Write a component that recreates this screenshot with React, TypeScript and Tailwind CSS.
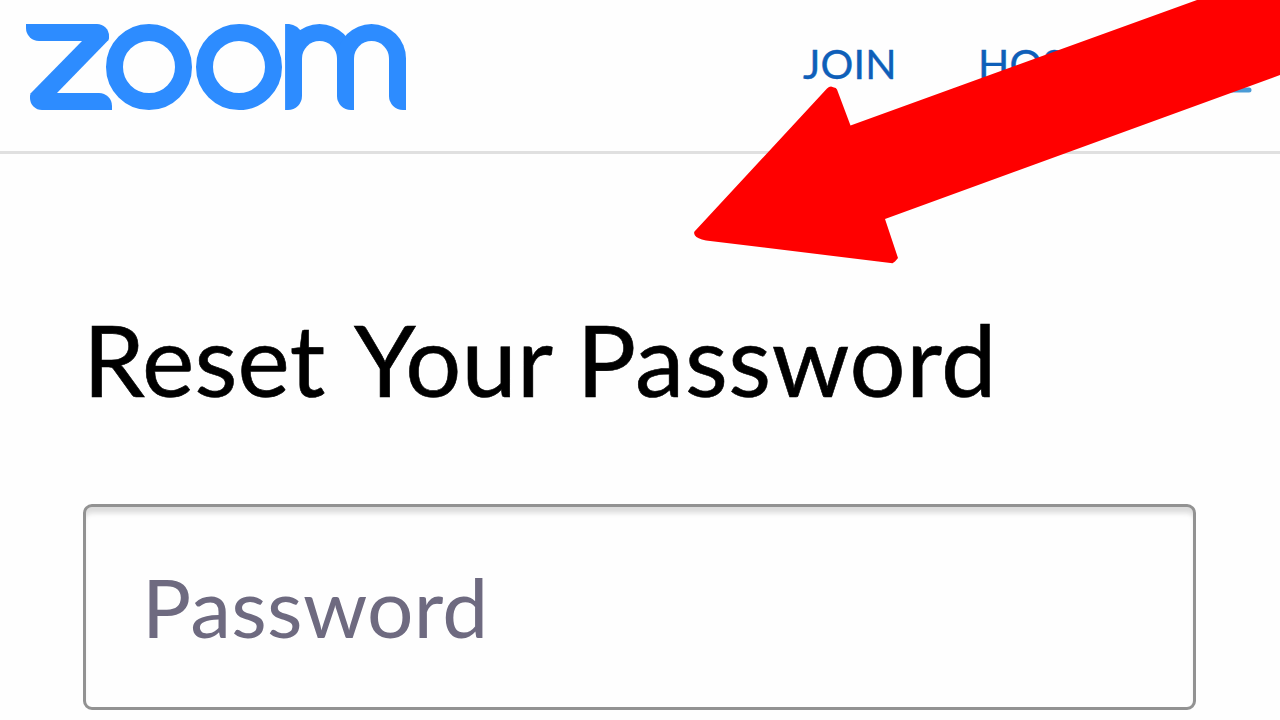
import React, { useState } from 'react';

function ZoomLogo() {
  return (
    <a href="#" aria-label="zoom" className="flex h-[86px] items-start">
      {/* z */}
      <span className="flex h-[86px] w-[86px] flex-col">
        <span className="h-[17px] w-[82.5px] rounded-tr-[12px] rounded-br-[3px] rounded-bl-[13px] bg-[#2d8cff]" />
        <span className="-my-px h-[54px] w-[86px] bg-[#2d8cff] [clip-path:polygon(57px_0,82.5px_0,30px_54px,4px_54px)]" />
        <span className="ml-[3.5px] h-[17px] w-[82.5px] rounded-tl-[3px] rounded-tr-[13px] rounded-bl-[12px] bg-[#2d8cff]" />
      </span>
      {/* oo */}
      <span className="-ml-[6.5px] h-[86px] w-[86px] rounded-full border-[17px] border-[#2d8cff]" />
      <span className="ml-[4.3px] h-[86px] w-[86px] rounded-full border-[17px] border-[#2d8cff]" />
      {/* m */}
      <span className="ml-[3.3px] flex h-[86px] w-[121px]">
        <span className="h-[86px] w-[17px] rounded-br-[14px] bg-[#2d8cff] [clip-path:polygon(0_0,4px_0,8px_1px,12px_3px,15px_6px,17px_6px,17px_100%,0_100%)]" />
        <span className="-ml-[17px] h-[36px] w-[69px] rounded-t-[34.5px] border-x-[17px] border-t-[17px] border-[#2d8cff]" />
        <span className="-ml-[17px] h-[36px] w-[69px] rounded-t-[34.5px] border-x-[17px] border-t-[17px] border-[#2d8cff]" />
        <span className="-ml-[69px] mt-[34px] h-[52px] w-[17px] shrink-0 rounded-bl-[14px] bg-[#2d8cff]" />
        <span className="mt-[34px] ml-[35px] h-[52px] w-[17px] shrink-0 rounded-bl-[14px] bg-[#2d8cff]" />
      </span>
    </a>
  );
}

function RedArrow() {
  return (
    <svg className="pointer-events-none absolute top-0 right-0" width="600" height="280" viewBox="680 0 600 280">
      <path
        d="M1197 0 L850.5 125.5 L837 89.5 Q836 87.5 834 87.5 L831 86.5 Q829 86.5 827 88.5 L694.5 231.5 Q693.5 233 695 235.5 Q697 238.5 706 240.5 L892.5 263.2 L895 261.5 L898 258 L885 219 L1280 75 V0 Z"
        fill="#ff0000"
      />
    </svg>
  );
}

export default function App() {
  const [password, setPassword] = useState('');

  const navClass = "text-[41px] leading-none font-normal tracking-[0.2px] text-[#0e5fb9] [-webkit-text-stroke:0.4px_#0e5fb9]";

  return (
    <div className="relative h-[720px] w-[1280px] overflow-hidden bg-[#fefefe] font-['Lato',sans-serif]">
      <header className="flex h-[154px] items-start border-b-[3px] border-[#e0e0e0] pt-6 pr-7 pl-[26px]">
        <ZoomLogo />
        <nav className="mt-[19px] ml-auto flex items-start">
          <a href="#" className={`${navClass} w-[175px]`}>JOIN</a>
          <a href="#" className={`${navClass} w-[226px]`}>HOST</a>
          <button aria-label="Menu" className="mt-1">
            <svg width="48" height="46" viewBox="0 0 48 46" fill="none" stroke="#4a9bd6" strokeWidth="5" strokeLinecap="round">
              <path d="M3 7h42M3 25h42M3 43h42" />
            </svg>
          </button>
        </nav>
      </header>

      <main className="px-[83px]">
        <h1 className="pt-[145px] text-[99px] leading-[120px] font-normal tracking-[0.2px] whitespace-nowrap text-black [-webkit-text-stroke:0.6px_#000]">
          <span className="mr-[7px]">Reset</span> Your <span className="tracking-[0.6px]">Password</span>
        </h1>
        <input
          type="text"
          value={password}
          onChange={(e) => setPassword(e.target.value)}
          placeholder="Password"
          className="mt-[85px] block h-[206px] w-[1113px] rounded-[9px] border-[3px] border-[#929292] bg-[#fefefe] px-[56px] pb-[3px] text-[82px] tracking-[0.3px] text-[#6e6a80] shadow-[inset_0_8px_5px_-2px_#dcdcdc] outline-none placeholder:text-[#6e6a80]"
        />
      </main>

      <RedArrow />
    </div>
  );
}
